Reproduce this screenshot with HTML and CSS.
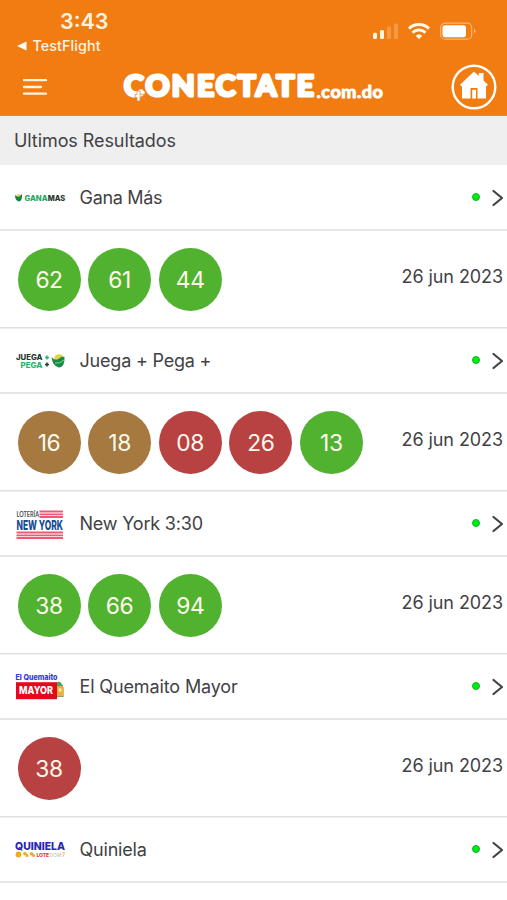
FILE: index.html
```html
<!DOCTYPE html>
<html lang="es">
<head>
<meta charset="utf-8">
<title>Conectate</title>
<link rel="stylesheet" href="styles.css">
</head>
<body>
<header class="top">
  <div class="status">
    <div class="status-left">
      <div class="clock">3:43</div>
      <div class="back"><svg width="10" height="10" viewBox="0 0 10 10"><path d="M0 5 9.500 .4v9.200z" fill="#fff"/></svg><span>TestFlight</span></div>
    </div>
    <svg class="status-icons" width="104" height="20" viewBox="0 0 104 20">
      <g fill="#fff4df">
        <rect x="0" y="12.700" width="4" height="6.300" rx="1.300"/>
        <rect x="7" y="10" width="4" height="9" rx="1.300"/>
        <rect x="14" y="6.500" width="4" height="12.500" rx="1.300" opacity=".25"/>
        <rect x="21" y="3.500" width="4" height="15.500" rx="1.300" opacity=".25"/>
      </g>
      <g fill="none" stroke="#fff8ea" stroke-width="2.900">
        <path d="M36 8.600a14.300 14.300 0 0 1 20 0"/>
        <path d="M39.500 12.700a9.300 9.300 0 0 1 13 0"/>
      </g>
      <path d="M42.600 15.800a5 5 0 0 1 6.800 0L46 19.200z" fill="#fff8ea"/>
      <rect x="67.700" y="3.200" width="31" height="16" rx="4.500" fill="none" stroke="#fff" stroke-opacity=".45" stroke-width="1.200"/>
      <rect x="69.500" y="5.200" width="23.500" height="12" rx="2.500" fill="#fff"/>
      <path d="M101 8.500q3 2.500 0 5z" fill="#fff" opacity=".5"/>
    </svg>
  </div>
  <nav class="nav">
    <svg class="menu" width="26" height="18" viewBox="0 0 26 18"><path d="M2 2.200h22M2 9h17M2 15.700h22" stroke="#fff4e2" stroke-width="2.300" stroke-linecap="round"/></svg>
    <svg class="brand" width="268" height="34" viewBox="0 0 268 34">
      <text class="brand-main" x="5" y="26.400" textLength="192" lengthAdjust="spacingAndGlyphs">CONECTATE</text>
      <text class="brand-sub" x="197.500" y="28" textLength="67" lengthAdjust="spacingAndGlyphs">.com.do</text>
      <path d="M16 24.500h2v-3.500h3v10h-3v-3.500h-2zM21 24.200h4M21 28.200h4" fill="#fff" stroke="#e09152" stroke-width=".8"/>
    </svg>
    <svg class="home" width="46" height="46" viewBox="0 0 46 46">
      <circle cx="23" cy="23" r="21.300" fill="none" stroke="#fff" stroke-width="2.400"/>
      <path d="M23 7.500 27.800 12V9h4.700v7.500l4.500 4.200-1.400 1.600H35V34.500h-8.500V24h-7v10.500H11V22.300h-.8L9 20.700z" fill="#fff"/>
      <path d="M21.200 34.500v-8.700h3.800v8.700z" fill="#fff"/>
    </svg>
  </nav>
</header>
<main>
  <h1 class="title"><span>Ultimos Resultados</span></h1>

  <section>
    <div class="game">
      <svg class="logo" width="52" height="34" viewBox="0 0 52 34">
        <path d="M1 14q3.500 3 7-1 .5 6-2.500 7.500Q1 20 1 14z" fill="#168344"/><circle cx="4.500" cy="14.500" r="1.400" fill="#e6cf45"/>
        <text class="l-gana" x="10.500" y="19.700" textLength="23" lengthAdjust="spacingAndGlyphs" fill="#26a860">GANA</text>
        <text class="l-gana" x="33.700" y="19.700" textLength="17.500" lengthAdjust="spacingAndGlyphs" fill="#29362f">MAS</text>
      </svg>
      <span class="name n1">Gana Más</span><i class="dot"></i>
      <svg class="chev" width="13" height="18" viewBox="0 0 13 18"><path d="M2.500 2l8.500 7-8.500 7"/></svg>
    </div>
    <div class="result"><b class="ball green">62</b><b class="ball green">61</b><b class="ball green">44</b><time>26 jun 2023</time></div>
  </section>

  <section>
    <div class="game">
      <svg class="logo" width="52" height="34" viewBox="0 0 52 34">
        <text class="l-juega" x="2" y="16.200" textLength="26.500" lengthAdjust="spacingAndGlyphs" fill="#29372e">JUEGA</text>
        <text class="l-juega" x="6.500" y="23.700" textLength="22" lengthAdjust="spacingAndGlyphs" fill="#2bb26a">PEGA</text>
        <path d="M31 13.500h4M33 11.500v4" stroke="#2bb26a" stroke-width="1.500"/><path d="M31 20.500h4M33 18.500v4" stroke="#29372e" stroke-width="1.500"/>
        <circle cx="45" cy="15" r="4.800" fill="#e2d23e"/><path d="M37.500 13q3 4 7 2 3-3 6-2 .5 10-5.500 10.500-6.500-1-7.500-10.500z" fill="#188a48"/><path d="M41 19q5 1 9-3" stroke="#8ed084" fill="none"/>
      </svg>
      <span class="name n2">Juega + Pega +</span><i class="dot"></i>
      <svg class="chev" width="13" height="18" viewBox="0 0 13 18"><path d="M2.500 2l8.500 7-8.500 7"/></svg>
    </div>
    <div class="result"><b class="ball brown">16</b><b class="ball brown">18</b><b class="ball red">08</b><b class="ball red">26</b><b class="ball green">13</b><time>26 jun 2023</time></div>
  </section>

  <section>
    <div class="game">
      <svg class="logo" width="52" height="34" viewBox="0 0 52 34">
        <path d="M25.500 4.500h23.500M25.500 7.300h23.500M25.500 10h23.500M2.500 25.500h46.500M2.500 28.300h46.500M2.500 31h46.500" stroke="#ee5a75" stroke-width="1.800"/>
        <text class="l-lot" x="2.500" y="9.900" textLength="22.500" lengthAdjust="spacingAndGlyphs" fill="#4b5056">LOTERÍA</text>
        <text class="l-ny" x="2.500" y="22.700" textLength="46.500" lengthAdjust="spacingAndGlyphs" fill="#174c93">NEW YORK</text>
      </svg>
      <span class="name n3">New York 3:30</span><i class="dot"></i>
      <svg class="chev" width="13" height="18" viewBox="0 0 13 18"><path d="M2.500 2l8.500 7-8.500 7"/></svg>
    </div>
    <div class="result"><b class="ball green">38</b><b class="ball green">66</b><b class="ball green">94</b><time>26 jun 2023</time></div>
  </section>

  <section>
    <div class="game">
      <svg class="logo" width="52" height="34" viewBox="0 0 52 34">
        <text class="l-quem" x="1.500" y="9.500" textLength="42" lengthAdjust="spacingAndGlyphs" fill="#3438cf">El Quemaito</text>
        <path d="M42 14q1-3 4-2 4 3 3.500 9v6H41z" fill="#4da35d"/><rect x="42" y="16" width="7.500" height="10.500" rx="2" fill="#efad3a"/><rect x="44.500" y="18.500" width="3" height="3" fill="#fff0a8"/>
        <rect x="2" y="12.200" width="41" height="17" fill="#e5091b"/>
        <text class="l-mayor" x="5" y="24.400" textLength="34" lengthAdjust="spacingAndGlyphs" fill="#fff">MAYOR</text>
      </svg>
      <span class="name n4">El Quemaito Mayor</span><i class="dot"></i>
      <svg class="chev" width="13" height="18" viewBox="0 0 13 18"><path d="M2.500 2l8.500 7-8.500 7"/></svg>
    </div>
    <div class="result"><b class="ball red">38</b><time>26 jun 2023</time></div>
  </section>

  <section>
    <div class="game">
      <svg class="logo" width="52" height="34" viewBox="0 0 52 34">
        <text class="l-quin" x="1" y="17" textLength="50" lengthAdjust="spacingAndGlyphs" fill="#2b24bd">QUINIELA</text>
        <circle cx="4.500" cy="21.500" r="2.900" fill="#f4a52a"/><circle cx="11" cy="20.700" r="1.800" fill="#f4a52a"/><circle cx="13" cy="22.500" r="1.500" fill="#f4a52a"/><circle cx="17.500" cy="20.700" r="1.800" fill="#f4a52a"/><circle cx="19.500" cy="22.500" r="1.500" fill="#f4a52a"/>
        <text class="l-tiny" x="22.500" y="23.500" textLength="12.500" lengthAdjust="spacingAndGlyphs" fill="#e33546">LOTE</text>
        <text class="l-tiny thin" x="35.500" y="23.500" textLength="12" lengthAdjust="spacingAndGlyphs" fill="#b9b9b9">DOM</text><path d="M48 19.800h2.500l-1.500 4" stroke="#f6c06a" fill="none"/>
      </svg>
      <span class="name n5">Quiniela</span><i class="dot"></i>
      <svg class="chev" width="13" height="18" viewBox="0 0 13 18"><path d="M2.500 2l8.500 7-8.500 7"/></svg>
    </div>
  </section>
</main>
</body>
</html>
```

FILE: styles.css
```css
* { box-sizing: border-box; }
body { margin: 0; background: #fff; color: #424144; font-family: Inter, sans-serif; height: 900px; overflow: hidden; }
svg { display: block; flex: none; }
.top { height: 116px; background: #f17c11; border-bottom: 1px solid #e8872f; }
.status { height: 62px; display: flex; justify-content: space-between; padding: 8px 30px 0 17px; color: #fff4e2; }
.clock { font-size: 21.5px; line-height: 26px; font-weight: 600; padding-left: 43px; }
.back { display: flex; align-items: center; gap: 5.5px; font-size: 14.3px; line-height: 18px; font-weight: 500; margin-top: 3px; letter-spacing: .1px; }
.status-icons { margin-top: 12px; }
.nav { height: 50px; display: flex; align-items: center; padding: 0 10px 0 22px; }
.brand { margin-left: 71px; overflow: visible; }
.home { margin-left: auto; }
.brand text { font-family: Lato, sans-serif; font-weight: 700; fill: #fff; stroke: #fff; stroke-linejoin: round; }
.brand-main { font-size: 29px; stroke-width: 3.2px; letter-spacing: 2.2px; }
.brand .brand-sub { font-size: 17.5px; stroke-width: 1px; letter-spacing: .5px; }
.title { margin: 0; height: 49px; padding-left: 14px; background: #efefef; font-size: 18px; font-weight: 400; line-height: 49px; letter-spacing: -.08px; }
.game { height: 66px; display: flex; align-items: center; padding: 1px 3px 0 14px; border-bottom: 2px solid #e6e6e8; }
.name { margin-left: 13.5px; font-size: 18px; line-height: 24px; white-space: nowrap; letter-spacing: -.2px; }
.n1 { letter-spacing: -.3px; }
.n4 { letter-spacing: -.13px; }
.dot { width: 8px; height: 8px; border-radius: 50%; margin: 0 11.5px 2px auto; background: #05e818; border: 1px solid #0cba1a; flex: none; }
.chev { fill: none; stroke: #434246; stroke-width: 2.2; stroke-linecap: round; stroke-linejoin: round; }
.result { height: 97px; display: flex; align-items: center; gap: 7.6px; padding: 0 4px 0 17.5px; position: relative; border-bottom: 1px solid #e1e1e3; box-shadow: 0 1px 0 #efeff0; }
.ball { width: 63px; height: 63px; border-radius: 50%; display: grid; place-items: center; flex: none; color: #fff9ec; font-size: 22.8px; font-weight: 400; letter-spacing: -.4px; }
.green { background: #51b230; }
.brown { background: #a57940; }
.red { background: #b84242; }
time { margin-left: auto; margin-bottom: 6px; font-size: 18px; white-space: nowrap; letter-spacing: -.08px; }
.logo text { font-family: Inter, sans-serif; font-weight: 800; }
.l-gana, .l-juega { font-size: 7.5px; }
.logo .l-lot { font-family: Lato, sans-serif; font-size: 7.5px; font-weight: 700; }
.logo .l-ny { font-size: 13.5px; }
.l-quem { font-size: 7.5px; }
.l-mayor { font-size: 11px; }
.l-quin { font-size: 11px; }
.l-tiny { font-size: 4.7px; }
.logo .thin { font-weight: 400; }
```
